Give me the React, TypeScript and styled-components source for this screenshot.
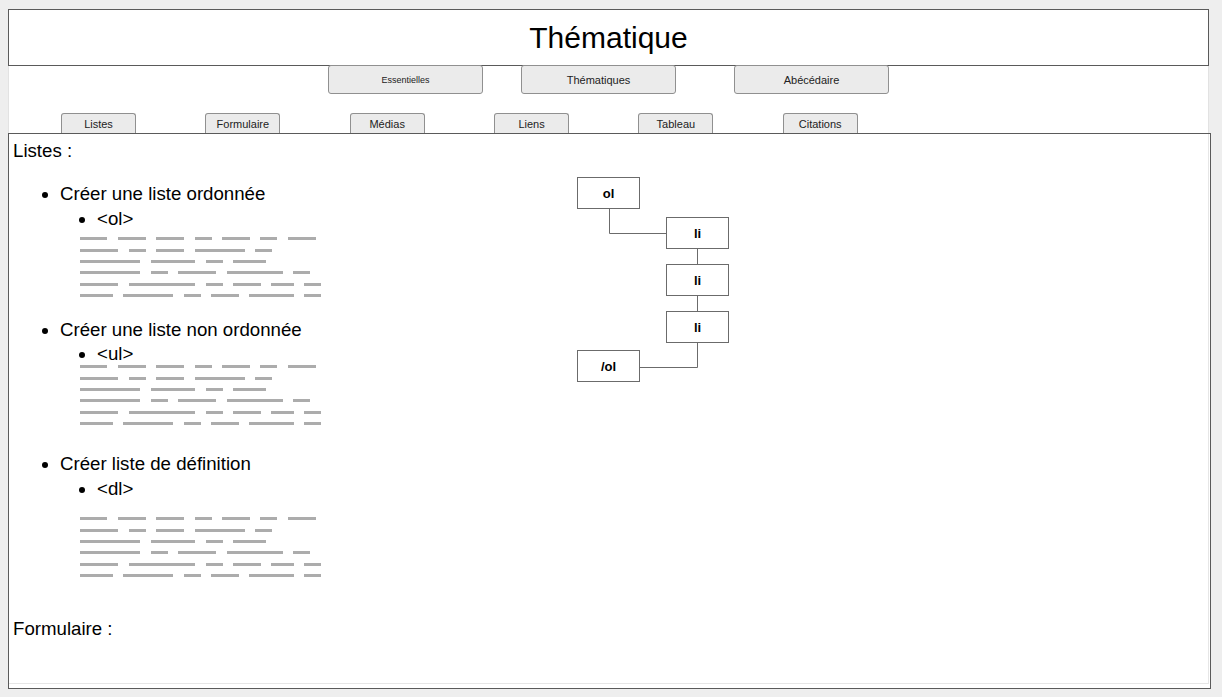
import React from "react";
import styled, { createGlobalStyle } from "styled-components";

const GlobalStyle = createGlobalStyle`
  html, body {
    margin: 0;
    padding: 0;
    background: #eeeeee;
  }
  body {
    font-family: "Liberation Sans", Arial, sans-serif;
    color: #000;
  }
`;

const Page = styled.div`
  padding: 9px 0 0 8px;
  width: 1203px;
`;

const Header = styled.header`
  box-sizing: border-box;
  width: 1201px;
  height: 57px;
  border: 1px solid #5a5a5a;
  background: #fff;
  display: flex;
  align-items: center;
  justify-content: center;
  font-size: 30px;
  line-height: 36px;
`;

const Nav = styled.nav`
  box-sizing: border-box;
  width: 1201px;
  height: 67px;
  background: #fff;
  border-left: 1px solid #e2e2e2;
  border-right: 1px solid #e2e2e2;
  display: flex;
  flex-direction: column;
`;

const MainNavRow = styled.div`
  display: flex;
  height: 28px;
  margin-top: -1px;
  margin-bottom: 20px;
`;

const MainButton = styled.button<{ $offset: number; $size: number }>`
  box-sizing: border-box;
  width: 155px;
  height: 29px;
  margin: 0 0 0 ${(p) => p.$offset}px;
  padding: 0;
  background: #ebebeb;
  border: 1px solid #909090;
  border-radius: 3px;
  font-family: "Liberation Sans", Arial, sans-serif;
  font-size: ${(p) => p.$size}px;
  color: #222;
`;

const TabRow = styled.div`
  display: flex;
  height: 20px;
  padding-left: 52px;
  gap: 69.35px;
`;

const Tab = styled.button`
  box-sizing: border-box;
  flex: none;
  width: 75px;
  height: 20px;
  margin: 0;
  padding: 0;
  background: #ebebeb;
  border: 1px solid #909090;
  border-bottom: none;
  border-radius: 3px 3px 0 0;
  font-family: "Liberation Sans", Arial, sans-serif;
  font-size: 11px;
  color: #222;
`;

const Content = styled.main`
  box-sizing: border-box;
  width: 1203px;
  height: 556px;
  border: 1px solid #5a5a5a;
  background: #fff;
  padding: 0 1px 4px 0;
`;

const Inner = styled.div`
  box-sizing: border-box;
  height: 100%;
  border-right: 1px solid #e6e6e6;
  border-bottom: 1px solid #e6e6e6;
  padding: 6px 0 0 4px;
  overflow: hidden;
`;

const SectionTitle = styled.h2<{ $mt: number }>`
  margin: ${(p) => p.$mt}px 0 0;
  font-size: 14pt;
  font-weight: normal;
  line-height: 21px;
`;

const SectionBody = styled.div`
  display: flex;
  align-items: flex-start;
`;

const ListColumn = styled.div`
  flex: 0 0 544px;
`;

const TopicList = styled.ul`
  margin: 22px 0 0;
  padding-left: 47px;
  list-style: disc;
  font-size: 14pt;
  line-height: 21px;
`;

const TopicItem = styled.li<{ $mt: number }>`
  margin-top: ${(p) => p.$mt}px;
`;

const SubList = styled.ul<{ $mt: number }>`
  margin: ${(p) => p.$mt}px 0 0;
  padding-left: 37px;
  list-style-type: disc;
`;

const TextLines = styled.svg<{ $mt: number }>`
  display: block;
  margin: ${(p) => p.$mt}px 0 0 20px;
`;

const Diagram = styled.div`
  position: relative;
  flex: none;
  width: 152px;
  height: 205px;
  margin: 16px 0 0 20px;
`;

const Connectors = styled.svg`
  position: absolute;
  left: 0;
  top: 0;
  overflow: visible;
`;

const Node = styled.div<{ $x: number; $y: number }>`
  position: absolute;
  left: ${(p) => p.$x}px;
  top: ${(p) => p.$y}px;
  box-sizing: border-box;
  width: 63px;
  height: 32px;
  border: 1px solid #6b6b6b;
  background: #fff;
  display: flex;
  align-items: center;
  justify-content: center;
  font-weight: bold;
  font-size: 13px;
`;

const ROW_Y = [0, 12, 23, 34, 46, 57];
const ROWS: [number, number][][] = [
  [[0, 27], [38, 28], [76, 28], [115, 17], [142, 28], [180, 17], [208, 28]],
  [[0, 38], [49, 17], [76, 28], [115, 50], [175, 17]],
  [[0, 60], [71, 44], [126, 17], [153, 33]],
  [[0, 60], [71, 17], [98, 38], [147, 56], [213, 17]],
  [[0, 38], [49, 66], [126, 17], [153, 28], [191, 23], [224, 17]],
  [[0, 33], [43, 50], [104, 17], [131, 28], [169, 45], [224, 17]],
];

const Placeholder: React.FC<{ mt: number }> = ({ mt }) => (
  <TextLines $mt={mt} width={242} height={60} viewBox="0 0 242 60">
    {ROWS.map((row, ri) =>
      row.map(([x, w], si) => (
        <rect key={`${ri}-${si}`} x={x} y={ROW_Y[ri]} width={w} height={3} fill="#acacac" />
      ))
    )}
  </TextLines>
);

const topics = [
  { title: "Créer une liste ordonnée", tag: "<ol>", mt: 0, subMt: 4, barsMt: 8 },
  { title: "Créer une liste non ordonnée", tag: "<ul>", mt: 22, subMt: 3, barsMt: 1 },
  { title: "Créer liste de définition", tag: "<dl>", mt: 28, subMt: 4, barsMt: 18 },
];

const nodes = [
  { label: "ol", x: 0, y: 0 },
  { label: "li", x: 89, y: 40 },
  { label: "li", x: 89, y: 87 },
  { label: "li", x: 89, y: 134 },
  { label: "/ol", x: 0, y: 173 },
];

const mainNav = [
  { label: "Essentielles", offset: 319, size: 9 },
  { label: "Thématiques", offset: 38, size: 11 },
  { label: "Abécédaire", offset: 58, size: 11 },
];

const tabs = ["Listes", "Formulaire", "Médias", "Liens", "Tableau", "Citations"];

export default function App() {
  return (
    <>
      <GlobalStyle />
      <Page>
        <Header>Thématique</Header>
        <Nav>
          <MainNavRow>
            {mainNav.map((b) => (
              <MainButton key={b.label} $offset={b.offset} $size={b.size}>
                {b.label}
              </MainButton>
            ))}
          </MainNavRow>
          <TabRow>
            {tabs.map((t) => (
              <Tab key={t}>{t}</Tab>
            ))}
          </TabRow>
        </Nav>
        <Content>
          <Inner>
            <SectionTitle $mt={0}>Listes :</SectionTitle>
            <SectionBody>
              <ListColumn>
                <TopicList>
                  {topics.map((t) => (
                    <TopicItem key={t.tag} $mt={t.mt}>
                      {t.title}
                      <SubList $mt={t.subMt}>
                        <li>{t.tag}</li>
                      </SubList>
                      <Placeholder mt={t.barsMt} />
                    </TopicItem>
                  ))}
                </TopicList>
              </ListColumn>
              <Diagram>
                <Connectors width={152} height={205} viewBox="0 0 152 205">
                  <g fill="none" stroke="#6b6b6b" strokeWidth={1}>
                    <path d="M32.5 32 V56.5 H89" />
                    <path d="M120.5 72 V87" />
                    <path d="M120.5 119 V134" />
                    <path d="M120.5 166 V190.5 H63" />
                  </g>
                </Connectors>
                {nodes.map((n, i) => (
                  <Node key={i} $x={n.x} $y={n.y}>
                    {n.label}
                  </Node>
                ))}
              </Diagram>
            </SectionBody>
            <SectionTitle $mt={41}>Formulaire :</SectionTitle>
          </Inner>
        </Content>
      </Page>
    </>
  );
}
